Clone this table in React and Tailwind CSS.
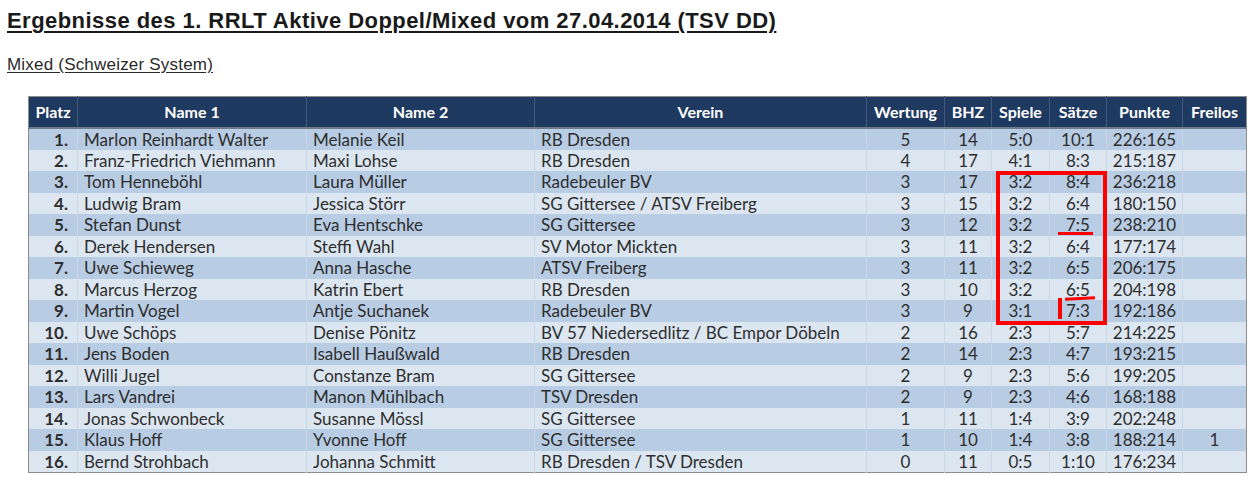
import React from "react";

const rows = [
  ["1.", "Marlon Reinhardt Walter", "Melanie Keil", "RB Dresden", "5", "14", "5:0", "10:1", "226:165", ""],
  ["2.", "Franz-Friedrich Viehmann", "Maxi Lohse", "RB Dresden", "4", "17", "4:1", "8:3", "215:187", ""],
  ["3.", "Tom Henneböhl", "Laura Müller", "Radebeuler BV", "3", "17", "3:2", "8:4", "236:218", ""],
  ["4.", "Ludwig Bram", "Jessica Störr", "SG Gittersee / ATSV Freiberg", "3", "15", "3:2", "6:4", "180:150", ""],
  ["5.", "Stefan Dunst", "Eva Hentschke", "SG Gittersee", "3", "12", "3:2", "7:5", "238:210", ""],
  ["6.", "Derek Hendersen", "Steffi Wahl", "SV Motor Mickten", "3", "11", "3:2", "6:4", "177:174", ""],
  ["7.", "Uwe Schieweg", "Anna Hasche", "ATSV Freiberg", "3", "11", "3:2", "6:5", "206:175", ""],
  ["8.", "Marcus Herzog", "Katrin Ebert", "RB Dresden", "3", "10", "3:2", "6:5", "204:198", ""],
  ["9.", "Martin Vogel", "Antje Suchanek", "Radebeuler BV", "3", "9", "3:1", "7:3", "192:186", ""],
  ["10.", "Uwe Schöps", "Denise Pönitz", "BV 57 Niedersedlitz / BC Empor Döbeln", "2", "16", "2:3", "5:7", "214:225", ""],
  ["11.", "Jens Boden", "Isabell Haußwald", "RB Dresden", "2", "14", "2:3", "4:7", "193:215", ""],
  ["12.", "Willi Jugel", "Constanze Bram", "SG Gittersee", "2", "9", "2:3", "5:6", "199:205", ""],
  ["13.", "Lars Vandrei", "Manon Mühlbach", "TSV Dresden", "2", "9", "2:3", "4:6", "168:188", ""],
  ["14.", "Jonas Schwonbeck", "Susanne Mössl", "SG Gittersee", "1", "11", "1:4", "3:9", "202:248", ""],
  ["15.", "Klaus Hoff", "Yvonne Hoff", "SG Gittersee", "1", "10", "1:4", "3:8", "188:214", "1"],
  ["16.", "Bernd Strohbach", "Johanna Schmitt", "RB Dresden / TSV Dresden", "0", "11", "0:5", "1:10", "176:234", ""],
];

const headers = ["Platz", "Name 1", "Name 2", "Verein", "Wertung", "BHZ", "Spiele", "Sätze", "Punkte", "Freilos"];
const widths = ["w-[49px]", "w-[229px]", "w-[228px]", "w-[332px]", "w-[78px]", "w-[47px]", "w-[58px]", "w-[57px]", "w-[76px]", "w-[64px]"];

export default function App() {
  return (
    <div className="w-[1254px] h-[481px] bg-white overflow-hidden text-[#2e2e2e]">
      <div className="pl-[7px] pt-[8px]">
        <h1 className="font-['Liberation_Sans',Arial,sans-serif] font-bold text-[22px] leading-[26px] underline decoration-[2px] underline-offset-[3px] text-[#1a1a1a] tracking-[0.45px]">
          Ergebnisse des 1. RRLT Aktive Doppel/Mixed vom 27.04.2014 (TSV DD)
        </h1>
        <div className="mt-[21px] font-['Liberation_Sans',Arial,sans-serif] text-[17px] leading-[20px] underline underline-offset-[2px] text-[#2a2a2a] tracking-[0.2px]">
          Mixed (Schweizer System)
        </div>
      </div>
      <div className="relative ml-[28px] mt-[21px] w-[1218px]">
        <table className="table-fixed border-collapse w-[1218px] border border-[#8c8c8c] font-['Lato','Open_Sans',sans-serif] text-[17px]">
          <colgroup>
            {widths.map((w, i) => (
              <col key={i} className={w} />
            ))}
          </colgroup>
          <thead>
            <tr className="bg-[#1f3a60] h-[31px] border-b-[2px] border-[#6d7b8c]">
              {headers.map((h, i) => (
                <th
                  key={i}
                  className="text-white font-bold text-[16px] leading-[20px] text-center px-0 border-r border-[#415a7c] last:border-r-0 whitespace-nowrap"
                >
                  {h}
                </th>
              ))}
            </tr>
          </thead>
          <tbody>
            {rows.map((r, ri) => (
              <tr key={ri} className={`h-[21.5px] ${ri % 2 === 0 ? "bg-[#b8cce4]" : "bg-[#dce6f1]"}`}>
                {r.map((c, ci) => (
                  <td
                    key={ci}
                    className={
                      "p-0 leading-[21px] whitespace-nowrap border-r border-[#c9d6e6] last:border-r-0 " +
                      (ci === 0
                        ? "text-right pr-[9px] font-bold"
                        : ci <= 3
                        ? "text-left pl-[6px]"
                        : "text-center")
                    }
                  >
                    {c}
                  </td>
                ))}
              </tr>
            ))}
          </tbody>
        </table>
        <div className="absolute left-[968px] top-[75px] w-[111px] h-[154px] border-[4px] border-[#ff0000]" />
        <div className="absolute left-[1030px] top-[136px] w-[35px] h-[3px] bg-[#ff0000]" />
        <div className="absolute left-[1037px] top-[201px] w-[30px] h-[3px] bg-[#ff0000] -rotate-[3deg]" />
        <div className="absolute left-[1030px] top-[202px] w-[4px] h-[21px] bg-[#ff0000]" />
      </div>
    </div>
  );
}
